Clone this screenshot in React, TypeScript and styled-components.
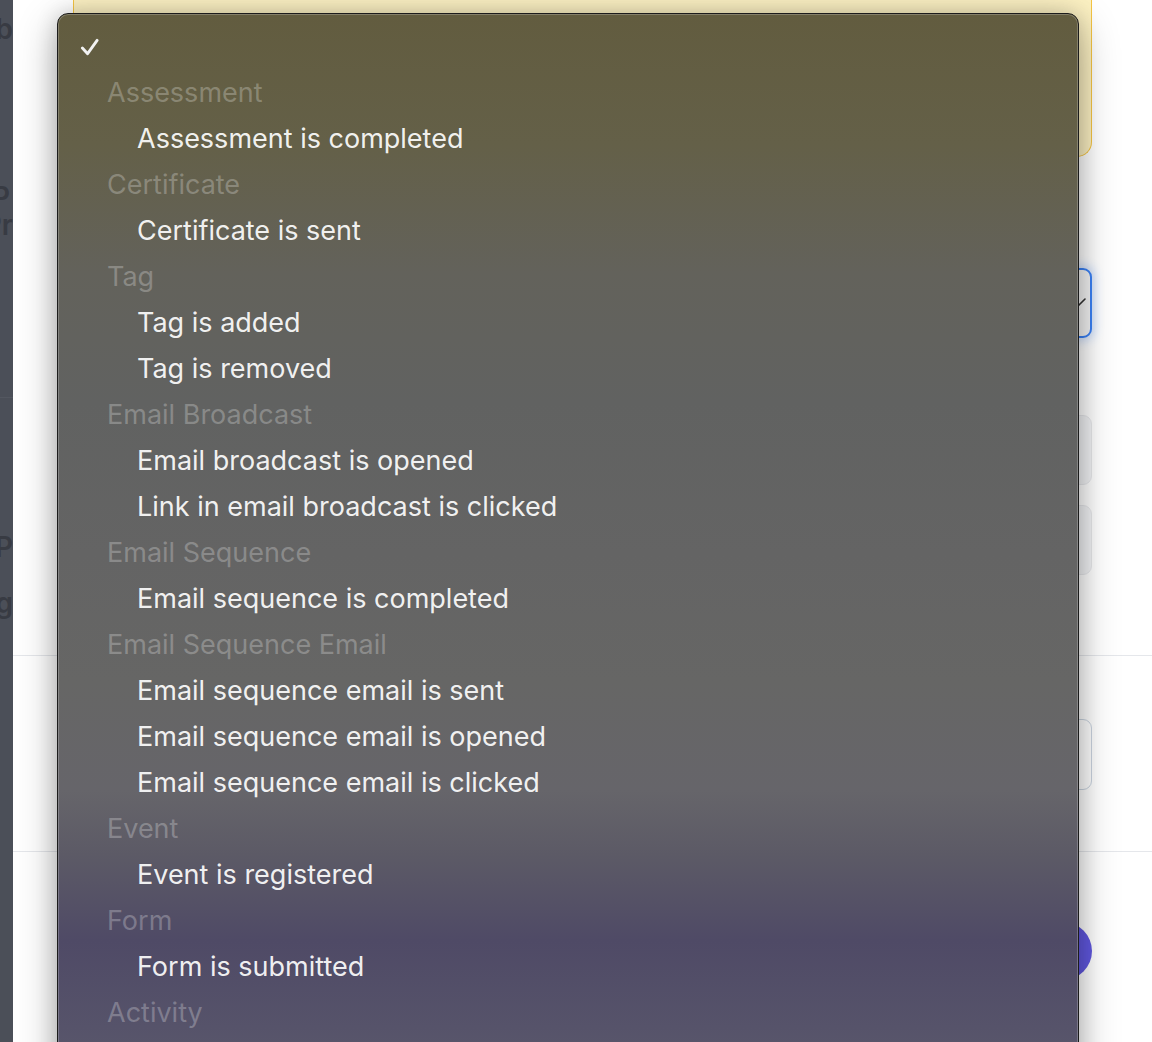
import styled, { createGlobalStyle } from 'styled-components';

const groups: { label: string; items: string[] }[] = [
  { label: 'Assessment', items: ['Assessment is completed'] },
  { label: 'Certificate', items: ['Certificate is sent'] },
  { label: 'Tag', items: ['Tag is added', 'Tag is removed'] },
  { label: 'Email Broadcast', items: ['Email broadcast is opened', 'Link in email broadcast is clicked'] },
  { label: 'Email Sequence', items: ['Email sequence is completed'] },
  {
    label: 'Email Sequence Email',
    items: ['Email sequence email is sent', 'Email sequence email is opened', 'Email sequence email is clicked'],
  },
  { label: 'Event', items: ['Event is registered'] },
  { label: 'Form', items: ['Form is submitted'] },
  { label: 'Activity', items: [] },
];

const App: React.FC = () => {
  return (
    <>
      <GlobalStyle />
      <Page>
        <Backdrop>
          <Peek $top={16}>Job</Peek>
          <Peek $top={142} $shift={3}>P</Peek>
          <Peek $top={2}>Pr</Peek>
          <BackdropLine />
          <Peek $top={136}>P</Peek>
          <Peek $top={30}>Big</Peek>
        </Backdrop>
        <Modal>
          <Section>
            <Callout />
            <SelectField>
              <Chevron viewBox="0 0 16 16">
                <path d="M1 4 L8 11 L15 4" />
              </Chevron>
            </SelectField>
            <MutedField $top={77} />
            <MutedField $top={20} />
          </Section>
          <Divider $top={80} />
          <Section>
            <TextField />
          </Section>
          <Divider $top={61} />
          <Section>
            <Footer>
              <SaveButton>Save</SaveButton>
            </Footer>
          </Section>
        </Modal>

        <Menu>
          <Row>
            <Check viewBox="0 0 20 20">
              <polyline points="2.5,10.5 8,16.5 18,2.5" />
            </Check>
          </Row>
          {groups.map((g) => (
            <div key={g.label}>
              <GroupLabel>{g.label}</GroupLabel>
              {g.items.map((item) => (
                <Item key={item}>{item}</Item>
              ))}
            </div>
          ))}
        </Menu>
      </Page>
    </>
  );
};

const GlobalStyle = createGlobalStyle`
  html, body {
    margin: 0;
    padding: 0;
    background: #4b4f58;
  }
  * {
    box-sizing: border-box;
  }
`;

const Page = styled.div`
  position: relative;
  display: flex;
  width: 1152px;
  height: 1042px;
  overflow: hidden;
  background: #4b4f58;
  font-family: Inter, 'Noto Sans', sans-serif;
`;

const Backdrop = styled.div`
  display: flex;
  flex-direction: column;
  flex: none;
  width: 13px;
  overflow: hidden;
`;

const Peek = styled.div<{ $top: number; $shift?: number }>`
  display: flex;
  justify-content: flex-end;
  width: 13px;
  height: 26px;
  margin-top: ${(p) => p.$top}px;
  padding-right: ${(p) => p.$shift ?? 0}px;
  font-size: 28px;
  font-weight: 600;
  line-height: 26px;
  color: #383b43;
  white-space: nowrap;
`;

const BackdropLine = styled.div`
  width: 13px;
  height: 1px;
  margin-top: 159px;
  background: #535760;
`;

const Modal = styled.div`
  display: flex;
  flex-direction: column;
  flex: 1;
  background: #fff;
`;

const Section = styled.div`
  display: flex;
  flex-direction: column;
  padding: 0 60px;
`;

const Callout = styled.div`
  height: 157px;
  background: #fcf1c3;
  border: 1.5px solid #f5c544;
  border-top: none;
  border-radius: 0 0 15px 15px;
`;

const SelectField = styled.div`
  display: flex;
  justify-content: flex-end;
  align-items: center;
  height: 70px;
  margin-top: 111px;
  padding-right: 4px;
  border: 2px solid #3b82f6;
  border-radius: 9px;
  background: #f5f5f5;
  box-shadow: 0 0 10px 3px rgba(59, 130, 246, 0.25);
`;

const Chevron = styled.svg`
  width: 16px;
  height: 16px;
  fill: none;
  stroke: #333;
  stroke-width: 1.6;
  stroke-linecap: round;
  stroke-linejoin: round;
`;

const MutedField = styled.div<{ $top: number }>`
  height: 70px;
  margin-top: ${(p) => p.$top}px;
  background: #f3f4f6;
  border: 1px solid #e8e9ec;
  border-radius: 9px;
`;

const Divider = styled.div<{ $top: number }>`
  height: 1px;
  margin-top: ${(p) => p.$top}px;
  background: #e5e7eb;
`;

const TextField = styled.div`
  height: 71px;
  margin-top: 63px;
  background: #fff;
  border: 1.5px solid #cbd5e1;
  border-radius: 9px;
`;

const Footer = styled.div`
  display: flex;
  justify-content: flex-end;
  margin-top: 70px;
`;

const SaveButton = styled.button`
  width: 200px;
  height: 58px;
  border: none;
  border-radius: 29px;
  background: #6158e0;
  color: #fff;
  font-family: Inter, sans-serif;
  font-size: 22px;
  font-weight: 600;
`;

const Menu = styled.div`
  position: absolute;
  left: 57px;
  top: 13px;
  width: 1022px;
  height: 1080px;
  padding: 10px 0;
  border: 1px solid #1c1c1c;
  border-radius: 11px;
  background: linear-gradient(
    180deg,
    #625c3f 0%,
    #646048 12%,
    #63625b 24%,
    #616261 36%,
    #646464 50%,
    #666665 62%,
    #66656a 72%,
    #5c5a66 78%,
    #4f4a66 86%,
    #56536a 94%,
    #5d5b6c 100%
  );
  box-shadow: inset 0 0 0 1px rgba(255, 255, 255, 0.22), 0 12px 40px rgba(0, 0, 0, 0.3),
    0 0 22px rgba(0, 0, 0, 0.16);
  font-family: Inter, 'Noto Sans', sans-serif;
  font-size: 27px;
  line-height: 46px;
  -webkit-font-smoothing: antialiased;
`;

const Row = styled.div`
  display: flex;
  align-items: center;
  height: 46px;
  padding-left: 22px;
`;

const Check = styled.svg`
  width: 19px;
  height: 19px;
  fill: none;
  stroke: #f2f2f2;
  stroke-width: 3;
  stroke-linecap: round;
  stroke-linejoin: round;
`;

const GroupLabel = styled.div`
  height: 46px;
  padding-left: 49px;
  color: rgba(255, 255, 255, 0.26);
  white-space: nowrap;
`;

const Item = styled.div`
  height: 46px;
  padding-left: 79px;
  color: rgba(255, 255, 255, 0.93);
  white-space: nowrap;
`;

export default App;
